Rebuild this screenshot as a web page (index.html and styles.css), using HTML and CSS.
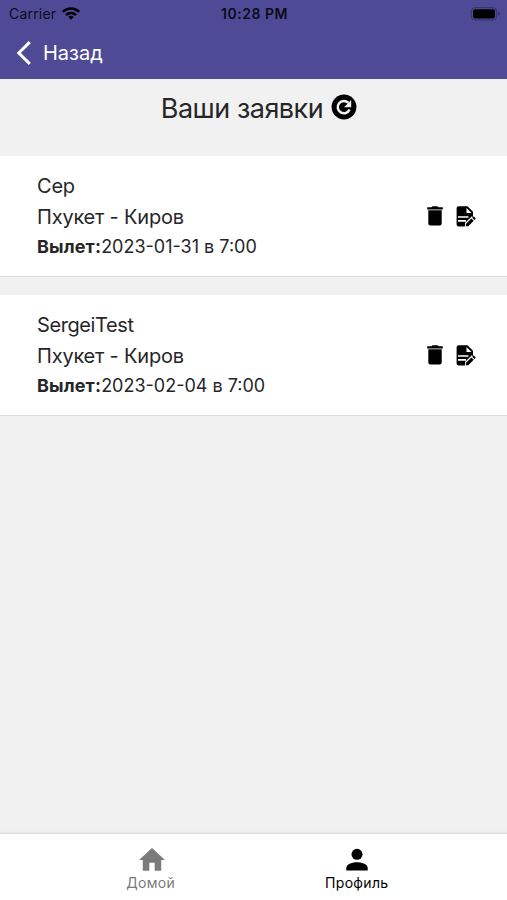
FILE: index.html
```html
<!DOCTYPE html>
<html lang="ru">
<head>
<meta charset="utf-8">
<title>Ваши заявки</title>
<link rel="stylesheet" href="styles.css">
</head>
<body>
<header class="header">
  <div class="status">
    <div class="carrier"><span>Carrier</span>
      <svg class="wifi" viewBox="0 0 18 13"><g fill="none" stroke="#000" stroke-width="2.5"><path d="M.9 4.9a11.5 11.5 0 0 1 16.2 0"/><path d="M4 8.1a7.1 7.1 0 0 1 10 0"/></g><path d="M9 12.8 6.3 10.1a3.8 3.8 0 0 1 5.4 0z"/></svg>
    </div>
    <span class="time">10:28 PM</span>
    <svg class="battery" viewBox="0 0 30 14"><rect x="1.2" y=".6" width="25.5" height="12.4" rx="3.6" fill="none" stroke="#35316c"/><rect x="3" y="2.2" width="22" height="9.2" rx="1.8"/><path d="M28.2 4.7c2 .5 2 3.7 0 4.2z" fill="#35316c"/></svg>
  </div>
  <nav class="back">
    <svg class="chevron" viewBox="0 0 16 26"><path d="M13.8 2.1 2.8 13l11 10.9" fill="none" stroke="#fff" stroke-width="3"/></svg>
    <span>Назад</span>
  </nav>
</header>
<main class="content">
  <div class="heading">
    <h1>Ваши заявки</h1>
    <svg class="refresh" viewBox="0 0 26 26"><circle cx="13" cy="13" r="12.4"/><path d="M18.6 15.6a6.2 6.2 0 1 1-1.2-6.8" fill="none" stroke="#f1f1f1" stroke-width="2.5"/><path d="M20.2 6v7.2H13z" fill="#f1f1f1"/></svg>
  </div>
  <section class="card">
    <div class="info">
      <p class="name">Сер</p>
      <p class="route">Пхукет - Киров</p>
      <p class="date"><b>Вылет:</b>2023-01-31 в 7:00</p>
    </div>
    <div class="actions">
      <svg class="trash" viewBox="0 0 16 20"><path d="M.2 1.2h4.2L5.5.2h5l1.1 1h4.2v2.4H.2zM1.3 4.2h13.4v13.4a2 2 0 0 1-2 2H3.3a2 2 0 0 1-2-2z"/></svg>
      <svg class="edit" viewBox="0 0 20 22"><path d="M2.6.3h8.9L17 5.800v5.400l-8.100 8.100v1.300H2.600a2 2 0 0 1-2-2V2.300a2 2 0 0 1 2-2z"/><path d="M10.500 1.900v5h5z" fill="#fff"/><path d="M2 11h10.500M2 14.900h8" stroke="#fff" stroke-width="1.700"/><path d="M9 20.700v-3.600l6.900-6.900 3.500 3.500-7 7z" fill="#fff"/><path d="m9.900 18 5.500-5.500 2.300 2.300-5.500 5.500H9.900zM16.200 11.700l1-1q.5-.4 1 0l1.200 1.200q.4.500 0 1l-1 1z"/></svg>
    </div>
  </section>
  <section class="card">
    <div class="info">
      <p class="name name-latin">SergeiTest</p>
      <p class="route">Пхукет - Киров</p>
      <p class="date"><b>Вылет:</b>2023-02-04 в 7:00</p>
    </div>
    <div class="actions">
      <svg class="trash" viewBox="0 0 16 20"><path d="M.2 1.2h4.2L5.5.2h5l1.1 1h4.2v2.4H.2zM1.3 4.2h13.4v13.4a2 2 0 0 1-2 2H3.3a2 2 0 0 1-2-2z"/></svg>
      <svg class="edit" viewBox="0 0 20 22"><path d="M2.6.3h8.9L17 5.800v5.400l-8.100 8.100v1.300H2.600a2 2 0 0 1-2-2V2.300a2 2 0 0 1 2-2z"/><path d="M10.500 1.900v5h5z" fill="#fff"/><path d="M2 11h10.500M2 14.900h8" stroke="#fff" stroke-width="1.700"/><path d="M9 20.700v-3.600l6.900-6.900 3.500 3.500-7 7z" fill="#fff"/><path d="m9.900 18 5.500-5.500 2.300 2.300-5.500 5.500H9.900zM16.200 11.700l1-1q.5-.4 1 0l1.200 1.200q.4.500 0 1l-1 1z"/></svg>
    </div>
  </section>
</main>
<footer class="tabs">
  <div class="tab">
    <svg class="tab-icon" viewBox="0 0 26 23"><path d="M13 0 0 12h3.800v10.800h6.500v-8h5.400v8h6.500V12H26z"/></svg>
    <span>Домой</span>
  </div>
  <div class="tab active">
    <svg class="tab-icon" viewBox="0 0 26 23"><circle cx="13" cy="6.300" r="5.500"/><path d="M2.300 22.600v-2.800c0-3.800 7-5.500 10.700-5.500s10.700 1.700 10.700 5.500v2.800z"/></svg>
    <span>Профиль</span>
  </div>
</footer>
</body>
</html>
```
FILE: styles.css
```css
* { box-sizing: border-box; }
body {
  margin: 0;
  height: 900px;
  display: flex;
  flex-direction: column;
  font-family: Inter, "Liberation Sans", sans-serif;
  background: #f1f1f1;
  color: #262628;
}
svg { display: block; flex: none; }
h1, p { margin: 0; font-weight: 400; white-space: nowrap; }
.header { height: 79px; background: #4f4a96; }
.status {
  height: 27px;
  padding: 0 7px 0 9px;
  display: grid;
  grid-template-columns: 1fr auto 1fr;
  align-items: center;
  font-size: 14px;
  color: #0b0a18;
}
.carrier { display: flex; align-items: center; gap: 6px; letter-spacing: .2px; }
.wifi { width: 18px; height: 13px; }
.time { font-weight: 600; font-size: 14px; letter-spacing: .5px; }
.battery { width: 30px; height: 14px; justify-self: end; }
.back {
  height: 51px;
  padding-left: 16px;
  display: flex;
  align-items: center;
  gap: 11px;
  color: #fff;
  font-size: 20px;
}
.chevron { width: 16px; height: 26px; }
.content { flex: 1; }
.heading {
  height: 77px;
  padding: 12px 0 0 11px;
  display: flex;
  justify-content: center;
  gap: 8px;
}
.heading h1 { font-size: 27px; line-height: 36px; letter-spacing: -.5px; }
.refresh { width: 26px; height: 26px; margin-top: 3px; }
.card {
  height: 121px;
  margin-bottom: 18px;
  padding: 15px 31px 0 37px;
  display: flex;
  justify-content: space-between;
  background: #fff;
  border-bottom: 1px solid #dcdcdc;
}
.name, .route { font-size: 20px; line-height: 31px; letter-spacing: -.2px; }
.name-latin { letter-spacing: -.4px; }
.date { font-size: 18px; line-height: 27px; }
.date b { font-weight: 700; letter-spacing: .15px; }
.actions { display: flex; align-items: flex-start; gap: 13px; padding-top: 35px; }
.trash { width: 16px; height: 20px; }
.edit { width: 20px; height: 22px; }
.tabs {
  height: 67px;
  padding: 0 47px 0 49px;
  display: flex;
  background: #fff;
  border-top: 1px solid #dedede;
  box-shadow: 0 -1px 1px #e8e8e8;
}
.tab {
  flex: 1;
  padding-top: 14px;
  display: flex;
  flex-direction: column;
  align-items: center;
  gap: 2px;
  font-size: 14px;
  line-height: 20px;
  letter-spacing: .3px;
  color: #7b7b7b;
  fill: #7b7b7b;
}
.tab span { margin-right: 2px; }
.tab.active { color: #000; fill: #000; }
.tab.active span { margin-right: 1px; }
.tab-icon { width: 26px; height: 23px; }
```
